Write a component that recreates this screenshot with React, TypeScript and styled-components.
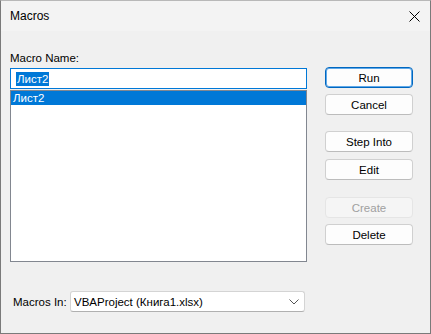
import React from "react";
import styled, { createGlobalStyle } from "styled-components";

const GlobalStyle = createGlobalStyle`
  html, body {
    margin: 0;
    padding: 0;
    background: #f0f0f0;
  }
  * {
    box-sizing: border-box;
  }
`;

const Window = styled.div`
  width: 431px;
  height: 334px;
  display: flex;
  flex-direction: column;
  background: #f0f0f0;
  border: 1px solid #7a7a7a;
  border-top-color: #b8b8b8;
  font-family: "Liberation Sans", Arial, sans-serif;
  font-size: 11.5px;
  color: #000;
`;

const TitleBar = styled.div`
  height: 30px;
  display: flex;
  align-items: center;
  justify-content: space-between;
  padding: 0 10px 0 9px;
  background: #f3f3f3;
`;

const Title = styled.span`
  font-size: 12px;
  line-height: 16px;
`;

const CloseIcon = styled.svg`
  width: 11px;
  height: 11px;
  margin-top: 1px;
`;

const Body = styled.div`
  flex: 1;
  display: grid;
  grid-template-columns: 297px 88px;
  align-content: start;
  column-gap: 18px;
  padding: 19px 0 0 9px;
`;

const LeftColumn = styled.div`
  display: flex;
  flex-direction: column;
`;

const Label = styled.label`
  line-height: 16px;
  margin-bottom: 2px;
`;

const NameInput = styled.div`
  height: 21px;
  display: flex;
  align-items: center;
  padding-left: 5px;
  background: #fff;
  border: 1px solid #0078d7;
`;

const Selection = styled.span`
  background: #0078d7;
  color: #fff;
  line-height: 14px;
  padding: 0 1px;
`;

const ListBox = styled.ul`
  list-style: none;
  margin: 1px 0 0;
  padding: 0;
  height: 172px;
  background: #fff;
  border: 1px solid #828790;
`;

const ListItem = styled.li<{ $selected?: boolean }>`
  height: 14px;
  line-height: 14px;
  padding-left: 2px;
  background: ${(p) => (p.$selected ? "#0078d7" : "transparent")};
  color: ${(p) => (p.$selected ? "#fff" : "#000")};
`;

const ButtonColumn = styled.div`
  display: flex;
  flex-direction: column;
  padding-top: 17px;
`;

const Button = styled.button<{ $primary?: boolean; $gap: number }>`
  height: 21px;
  margin-top: ${(p) => p.$gap}px;
  padding: 0;
  font-family: inherit;
  font-size: inherit;
  color: #000;
  background: #fdfdfd;
  border: 1px solid ${(p) => (p.$primary ? "#0067c0" : "#d0d0d0")};
  border-bottom-color: ${(p) => (p.$primary ? "#0067c0" : "#bcbcbc")};
  border-radius: 4px;
  box-shadow: ${(p) => (p.$primary ? "inset 0 0 0 1px #5fa8e8" : "none")};

  &:disabled {
    color: #a0a0a0;
    background: #f5f5f5;
    border-color: #e5e5e5;
  }
`;

const BottomRow = styled.div`
  grid-column: 1 / -1;
  display: flex;
  align-items: center;
  margin-top: 29px;
  padding-left: 3px;
`;

const BottomLabel = styled.span`
  width: 57px;
  flex-shrink: 0;
  white-space: nowrap;
`;

const Select = styled.div`
  width: 235px;
  height: 21px;
  display: flex;
  align-items: center;
  justify-content: space-between;
  padding: 0 5px 0 3px;
  background: #fff;
  border: 1px solid #d4d4d4;
  border-bottom-color: #b0b0b0;
  border-radius: 3px;
`;

const buttons = [
  { label: "Run", gap: 0, primary: true },
  { label: "Cancel", gap: 6 },
  { label: "Step Into", gap: 16 },
  { label: "Edit", gap: 7 },
  { label: "Create", gap: 17, disabled: true },
  { label: "Delete", gap: 6 },
];

export default function App() {
  return (
    <>
      <GlobalStyle />
      <Window>
        <TitleBar>
          <Title>Macros</Title>
          <CloseIcon viewBox="0 0 11 11">
            <path d="M0.5 0.5 L10.5 10.5 M10.5 0.5 L0.5 10.5" stroke="#000" strokeWidth="1" fill="none" />
          </CloseIcon>
        </TitleBar>
        <Body>
          <LeftColumn>
            <Label>Macro Name:</Label>
            <NameInput>
              <Selection>Лист2</Selection>
            </NameInput>
            <ListBox>
              <ListItem $selected>Лист2</ListItem>
            </ListBox>
          </LeftColumn>
          <ButtonColumn>
            {buttons.map((b) => (
              <Button key={b.label} $gap={b.gap} $primary={b.primary} disabled={b.disabled}>
                {b.label}
              </Button>
            ))}
          </ButtonColumn>
          <BottomRow>
            <BottomLabel>Macros In:</BottomLabel>
            <Select>
              <span>VBAProject (Книга1.xlsx)</span>
              <svg width="10" height="6" viewBox="0 0 10 6">
                <path d="M0.5 0.5 L5 5 L9.5 0.5" stroke="#555" strokeWidth="1" fill="none" />
              </svg>
            </Select>
          </BottomRow>
        </Body>
      </Window>
    </>
  );
}
